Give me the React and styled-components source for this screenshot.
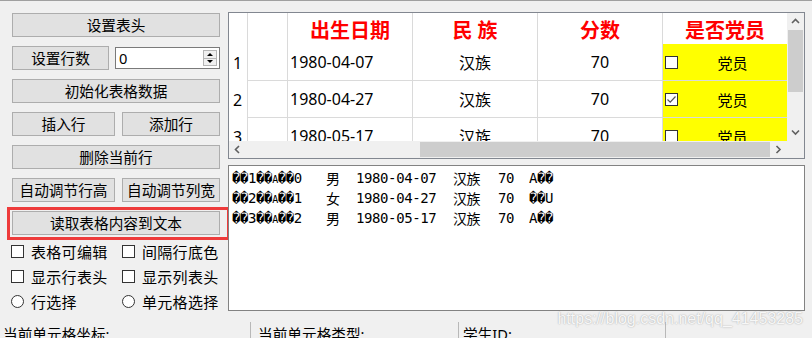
import React from 'react';
import styled, { createGlobalStyle } from 'styled-components';

const GlobalStyle = createGlobalStyle`
  body {
    margin: 0;
    background: #f0f0f0;
  }
`;

const CJK = `"Noto Sans", "Noto Sans CJK SC", sans-serif`;

const columns = [
  { title: '', width: 40 },
  { title: '出生日期', width: 125 },
  { title: '民 族', width: 125 },
  { title: '分数', width: 125 },
  { title: '是否党员', width: 124 },
];

const rows = [
  { no: '1', date: '1980-04-07', nation: '汉族', score: '70', member: false },
  { no: '2', date: '1980-04-27', nation: '汉族', score: '70', member: true },
  { no: '3', date: '1980-05-17', nation: '汉族', score: '70', member: false },
];

const lines = [
  { id: '1', tail: '0', sex: '男', date: '1980-04-07', last: 'A\uFFFD\uFFFD' },
  { id: '2', tail: '1', sex: '女', date: '1980-04-27', last: '\uFFFD\uFFFDU' },
  { id: '3', tail: '2', sex: '男', date: '1980-05-17', last: 'A\uFFFD\uFFFD' },
];

function Chevron({ dir }) {
  const pts = {
    up: '1,5 4.5,1.5 8,5',
    down: '1,1.5 4.5,5 8,1.5',
    left: '5,1 1.5,4.5 5,8',
    right: '1.5,1 5,4.5 1.5,8',
  }[dir];
  const vertical = dir === 'up' || dir === 'down';
  return (
    <svg width={vertical ? 9 : 7} height={vertical ? 7 : 9} viewBox={vertical ? '0 0 9 7' : '0 0 7 9'}>
      <polyline points={pts} fill="none" stroke="#606060" strokeWidth="1.6" />
    </svg>
  );
}

function Tick() {
  return (
    <svg width="11" height="11" viewBox="0 0 11 11">
      <polyline points="1.5,5.5 4.2,8.2 9.5,2.5" fill="none" stroke="#555" strokeWidth="1.2" />
    </svg>
  );
}

export default function App() {
  return (
    <>
      <GlobalStyle />
      <Window>
        <Main>
          <LeftPanel>
            <Button>设置表头</Button>
            <Row>
              <Button $w={97}>设置行数</Button>
              <Spin>
                <SpinText>0</SpinText>
                <SpinBtns>
                  <SpinHalf $up />
                  <SpinHalf />
                </SpinBtns>
              </Spin>
            </Row>
            <Button>初始化表格数据</Button>
            <Row>
              <Button $w={103}>插入行</Button>
              <Button $w={98}>添加行</Button>
            </Row>
            <Button>删除当前行</Button>
            <Row>
              <Button $w={103}>自动调节行高</Button>
              <Button $w={98}>自动调节列宽</Button>
            </Row>
            <RedFrame>
              <Button>读取表格内容到文本</Button>
            </RedFrame>
            <CheckGrid>
              <Option><Box />表格可编辑</Option>
              <Option><Box />间隔行底色</Option>
              <Option><Box />显示行表头</Option>
              <Option><Box />显示列表头</Option>
              <Option><Box $round />行选择</Option>
              <Option><Box $round />单元格选择</Option>
            </CheckGrid>
          </LeftPanel>

          <RightPanel>
            <GridFrame>
              <Viewport>
                <Table>
                  <Cell $head $rowHead />
                  {columns.map((c, i) => (
                    <Cell key={i} $head $last={i === columns.length - 1}>
                      <HeadText>{c.title}</HeadText>
                    </Cell>
                  ))}
                  {rows.map((r) => (
                    <React.Fragment key={r.no}>
                      <Cell $rowHead $align="flex-start"><RowNo>{r.no}</RowNo></Cell>
                      <Cell />
                      <Cell $align="flex-start"><DataText $pl={2}>{r.date}</DataText></Cell>
                      <Cell><DataText>{r.nation}</DataText></Cell>
                      <Cell><DataText>{r.score}</DataText></Cell>
                      <Cell $yellow $last $align="flex-start">
                        <GridCheck>{r.member && <Tick />}</GridCheck>
                        <MemberText>党员</MemberText>
                      </Cell>
                    </React.Fragment>
                  ))}
                </Table>
              </Viewport>
              <VScroll>
                <Arrow><Chevron dir="up" /></Arrow>
                <VTrack><VThumb /></VTrack>
                <Arrow><Chevron dir="down" /></Arrow>
              </VScroll>
              <HScroll>
                <Arrow><Chevron dir="left" /></Arrow>
                <HTrack><HThumb $offset={174} $size={350} /></HTrack>
                <Arrow><Chevron dir="right" /></Arrow>
              </HScroll>
              <Corner />
            </GridFrame>

            <TextBox>
              {lines.map((l) => (
                <Line key={l.id}>
                  <Field $w={94}>
                    {'\uFFFD\uFFFD' + l.id + '\uFFFD\uFFFD'}<SmallA>A</SmallA>{'\uFFFD\uFFFD' + l.tail}
                  </Field>
                  <Field $w={30}>{l.sex}</Field>
                  <Field $w={97}>{l.date}</Field>
                  <Field $w={45}>汉族</Field>
                  <Field $w={31}>70</Field>
                  <Field>{l.last}</Field>
                </Line>
              ))}
            </TextBox>
          </RightPanel>
        </Main>

        <StatusBar>
          <StatusCell $w={250} $pl={3} $first>当前单元格坐标:</StatusCell>
          <StatusCell $w={208} $pl={7}>当前单元格类型:</StatusCell>
          <StatusCell $w={207} $pl={4}>学生ID:</StatusCell>
          <StatusCell />
        </StatusBar>

        <Watermark>https://blog.csdn.net/qq_41453285</Watermark>
      </Window>
    </>
  );
}

const Window = styled.div`
  position: relative;
  box-sizing: border-box;
  width: 812px;
  height: 338px;
  overflow: hidden;
  border-top: 1px solid #a0a0a0;
  background: #f0f0f0;
  display: flex;
  flex-direction: column;
  font-family: ${CJK};
  color: #000;
`;

const Main = styled.div`
  display: flex;
  height: 321px;
  flex-shrink: 0;
`;

const LeftPanel = styled.div`
  display: flex;
  flex-direction: column;
  gap: 9px;
  width: 208px;
  margin: 12px 0 0 12px;
`;

const Row = styled.div`
  display: flex;
  align-items: center;
  justify-content: space-between;
`;

const Button = styled.button`
  box-sizing: border-box;
  width: ${p => (p.$w ? `${p.$w}px` : '100%')};
  height: 24px;
  padding: 0;
  border: 1px solid #adadad;
  background: #e1e1e1;
  font-family: ${CJK};
  font-size: 14.67px;
  line-height: 22px;
  color: #000;
`;

const Spin = styled.div`
  box-sizing: border-box;
  width: 105px;
  height: 22px;
  border: 1px solid #7a7a7a;
  background: #fff;
  display: flex;
  align-items: center;
`;

const SpinText = styled.span`
  padding-left: 3px;
  font-size: 14.67px;
  line-height: 20px;
`;

const SpinBtns = styled.div`
  box-sizing: border-box;
  margin-left: auto;
  margin-right: 2px;
  width: 14px;
  height: 16px;
  border: 1px solid #b5b5b5;
  background: #f0f0f0;
  display: flex;
  flex-direction: column;
`;

const SpinHalf = styled.div`
  flex: 1;
  display: flex;
  align-items: center;
  justify-content: center;
  border-top: ${p => (p.$up ? 'none' : '1px solid #b5b5b5')};

  &::before {
    content: '';
    border-left: 3px solid transparent;
    border-right: 3px solid transparent;
    ${p => (p.$up ? 'border-bottom: 3px solid #000;' : 'border-top: 3px solid #000;')}
  }
`;

const RedFrame = styled.div`
  border: 3px solid #ee3b3b;
  margin: -4px -10px -10px -5px;
  padding: 1px 7px 2px 2px;
  display: flex;
`;

const CheckGrid = styled.div`
  display: grid;
  grid-template-columns: 111px 1fr;
  grid-auto-rows: 25px;
  margin-left: -1px;
`;

const Option = styled.label`
  display: flex;
  align-items: center;
  gap: 7px;
  font-size: 15px;
  letter-spacing: 0.3px;
  white-space: nowrap;
`;

const Box = styled.span`
  box-sizing: border-box;
  width: 13px;
  height: 13px;
  border: 1px solid #333;
  background: #fff;
  border-radius: ${p => (p.$round ? '50%' : '0')};
  flex-shrink: 0;
`;

const RightPanel = styled.div`
  display: flex;
  flex-direction: column;
  gap: 6px;
  width: 577px;
  margin: 11px 0 0 8px;
`;

const GridFrame = styled.div`
  border: 1px solid #828790;
  background: #fff;
  display: grid;
  grid-template-columns: 558px 17px;
  grid-template-rows: 128px 17px;
`;

const Viewport = styled.div`
  overflow: hidden;
`;

const Table = styled.div`
  display: grid;
  grid-template-columns: 19px ${columns.map(c => `${c.width}px`).join(' ')};
  grid-auto-rows: auto;
`;

const Cell = styled.div`
  box-sizing: border-box;
  height: ${p => (p.$head ? 31 : 37)}px;
  display: flex;
  align-items: center;
  justify-content: ${p => p.$align || 'center'};
  background: ${p => (p.$yellow ? '#ffff00' : '#fff')};
  border-right: ${p => (p.$last ? 'none' : '1px solid #dadada')};
  border-bottom: ${p => (p.$head || p.$rowHead ? 'none' : '1px solid #dadada')};
`;

const HeadText = styled.span`
  padding-top: 4px;
  color: #ff0000;
  font-weight: bold;
  font-size: 20px;
  line-height: 26px;
  white-space: pre;
`;

const RowNo = styled.span`
  padding-left: 4px;
  font-size: 16px;
`;

const DataText = styled.span`
  padding-left: ${p => p.$pl || 0}px;
  font-size: 16px;
`;

const GridCheck = styled.span`
  box-sizing: border-box;
  width: 13px;
  height: 13px;
  margin-left: 2px;
  border: 1px solid #333;
  background: #fff;
  display: flex;
  align-items: center;
  justify-content: center;
  flex-shrink: 0;
`;

const MemberText = styled.span`
  flex: 1;
  text-align: center;
  font-size: 15px;
`;

const VScroll = styled.div`
  background: #f0f0f0;
  display: flex;
  flex-direction: column;
`;

const HScroll = styled.div`
  background: #f0f0f0;
  display: flex;
`;

const Arrow = styled.div`
  width: 17px;
  height: 17px;
  flex-shrink: 0;
  display: flex;
  align-items: center;
  justify-content: center;
`;

const VTrack = styled.div`
  flex: 1;
`;

const VThumb = styled.div`
  height: 62px;
  margin: 0 1px;
  background: #cdcdcd;
`;

const HTrack = styled.div`
  flex: 1;
  display: flex;
  align-items: center;
`;

const HThumb = styled.div`
  margin-left: ${p => p.$offset}px;
  width: ${p => p.$size}px;
  height: 15px;
  background: #cdcdcd;
`;

const Corner = styled.div`
  background: #f0f0f0;
`;

const TextBox = styled.div`
  box-sizing: border-box;
  height: 146px;
  border: 1px solid #828282;
  background: #fff;
  padding: 2px 0 0 3px;
`;

const Line = styled.div`
  display: flex;
  height: 20px;
  align-items: center;
  font-family: "DejaVu Sans Mono", "Noto Sans CJK SC", monospace;
  font-size: 14px;
  letter-spacing: -0.4px;
  white-space: pre;
`;

const Field = styled.span`
  display: inline-block;
  width: ${p => (p.$w ? `${p.$w}px` : 'auto')};
  flex-shrink: 0;
`;

const SmallA = styled.span`
  font-size: 10px;
`;

const StatusBar = styled.div`
  display: flex;
  flex: 1;
`;

const StatusCell = styled.div`
  box-sizing: border-box;
  width: ${p => (p.$w ? `${p.$w}px` : 'auto')};
  flex: ${p => (p.$w ? 'none' : '1')};
  padding: 2px 0 0 ${p => p.$pl || 0}px;
  border-left: ${p => (p.$first ? 'none' : '1px solid #b8b8b8')};
  font-size: 14.67px;
  line-height: 20px;
  white-space: nowrap;
`;

const Watermark = styled.div`
  position: absolute;
  right: 9px;
  top: 310px;
  font-family: "Liberation Sans", Arial, sans-serif;
  font-size: 16px;
  line-height: 16px;
  color: #f7f7f7;
  text-shadow: 0 0 1.5px #9a9a9a;
  pointer-events: none;
`;
